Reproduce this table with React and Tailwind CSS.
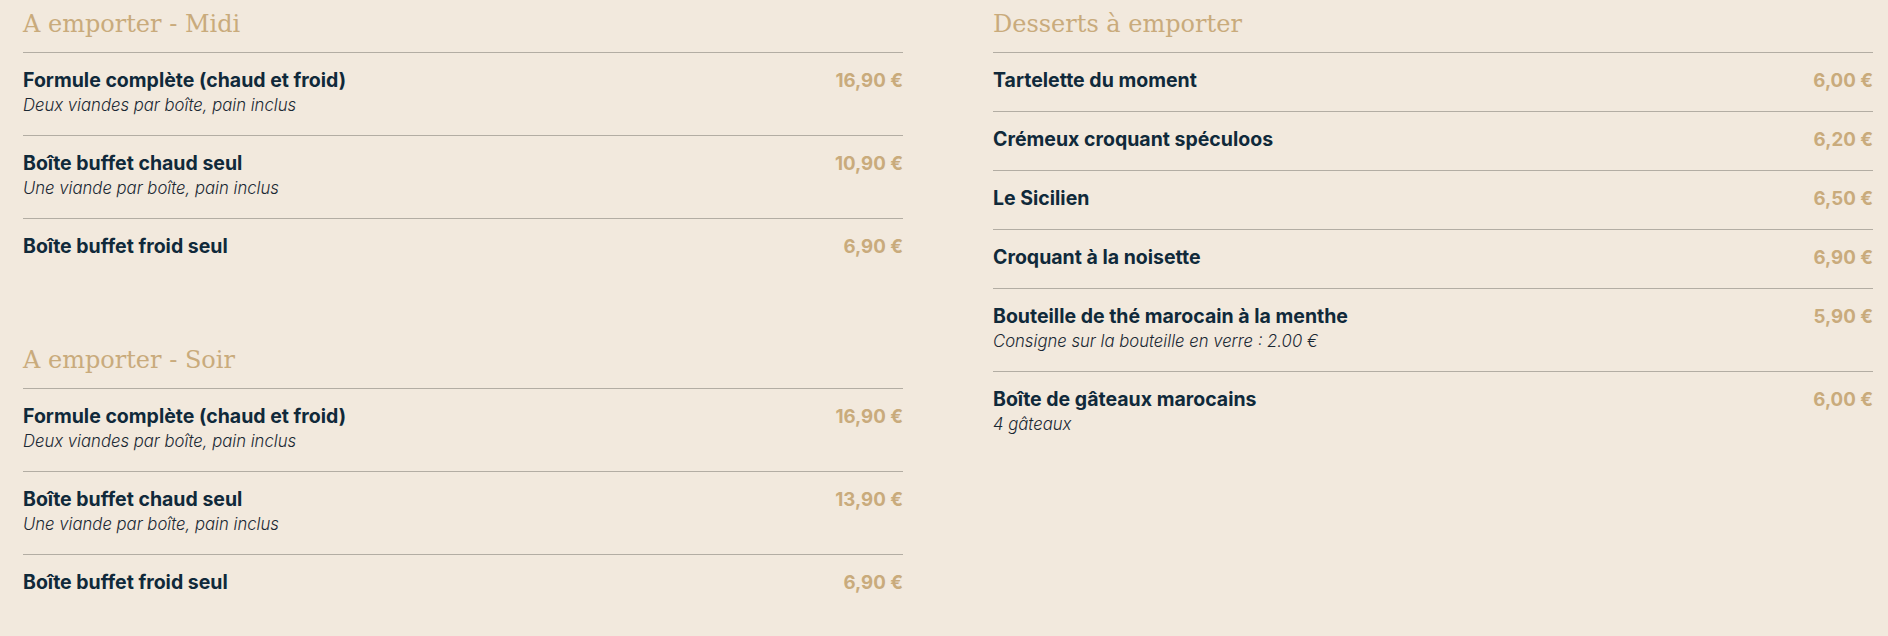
import React from 'react';

const sections = [
  {
    title: 'A emporter - Midi',
    items: [
      { name: 'Formule complète (chaud et froid)', desc: 'Deux viandes par boîte, pain inclus', price: '16,90 €' },
      { name: 'Boîte buffet chaud seul', desc: 'Une viande par boîte, pain inclus', price: '10,90 €' },
      { name: 'Boîte buffet froid seul', price: '6,90 €' },
    ],
  },
  {
    title: 'A emporter - Soir',
    items: [
      { name: 'Formule complète (chaud et froid)', desc: 'Deux viandes par boîte, pain inclus', price: '16,90 €' },
      { name: 'Boîte buffet chaud seul', desc: 'Une viande par boîte, pain inclus', price: '13,90 €' },
      { name: 'Boîte buffet froid seul', price: '6,90 €' },
    ],
  },
];

const desserts = {
  title: 'Desserts à emporter',
  items: [
    { name: 'Tartelette du moment', price: '6,00 €' },
    { name: 'Crémeux croquant spéculoos', price: '6,20 €' },
    { name: 'Le Sicilien', price: '6,50 €' },
    { name: 'Croquant à la noisette', price: '6,90 €' },
    { name: 'Bouteille de thé marocain à la menthe', desc: 'Consigne sur la bouteille en verre : 2.00 €', price: '5,90 €' },
    { name: 'Boîte de gâteaux marocains', desc: '4 gâteaux', price: '6,00 €' },
  ],
};

const MenuSection = ({ section, className = '' }) => (
  <div className={className}>
    <h2 className="font-['DejaVu_Serif',serif] text-[24px] leading-[31px] pt-[1px] text-[#c9ab7c] mb-[12px]">{section.title}</h2>
    <ul>
      {section.items.map((item, i) => (
        <li key={i} className="flex justify-between border-t border-[#b3ada3] pt-[15px] pb-[18px]">
          <div>
            <div className="text-[19.5px] leading-[25px] font-bold text-[#10293a]">{item.name}</div>
            {item.desc && <div className="text-[16.7px] leading-[24px] italic font-light text-[#1a2833]">{item.desc}</div>}
          </div>
          <div className="text-[18.7px] leading-[25px] font-bold text-[#c9ab7c]">{item.price}</div>
        </li>
      ))}
    </ul>
  </div>
);

const App = () => {
  return (
    <div className="min-h-[636px] bg-[#f2e9dd] font-['Inter',sans-serif] pl-[23px] pt-[8px]">
      <div className="flex gap-[90px]">
        <div className="w-[880px]">
          <MenuSection section={sections[0]} className="mb-[67px]" />
          <MenuSection section={sections[1]} />
        </div>
        <div className="w-[880px]">
          <MenuSection section={desserts} />
        </div>
      </div>
    </div>
  );
};

export default App;
